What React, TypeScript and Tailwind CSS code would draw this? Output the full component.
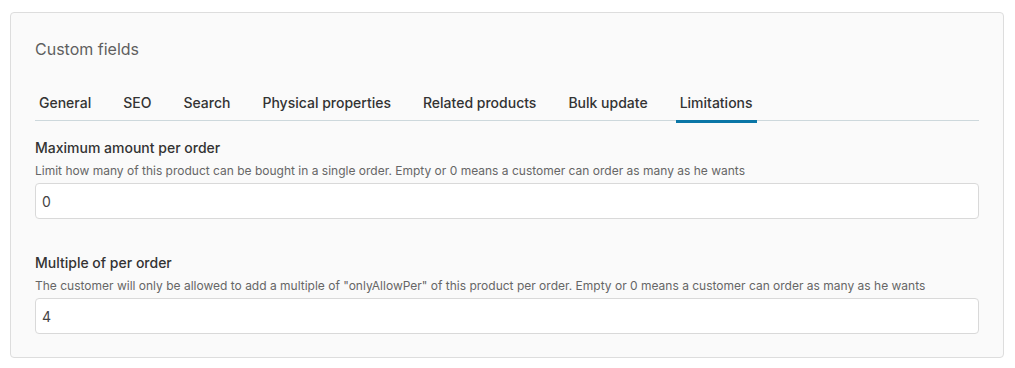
import { useState } from "react";

const TABS = ["General", "SEO", "Search", "Physical properties", "Related products", "Bulk update", "Limitations"];

function Field({ label, help, value }: { label: string; help: string; value: string }) {
  const [v, setV] = useState(value);
  return (
    <div>
      <div className="text-[14px] leading-5 font-medium text-[#333]">{label}</div>
      <div className="mt-[5px] text-[12px] leading-4 text-[#666]">{help}</div>
      <input
        value={v}
        onChange={(e) => setV(e.target.value)}
        className="mt-1 block h-[36px] w-full rounded-[4px] border border-[#d9d9d9] bg-white px-[6px] text-[14px] text-[#444] outline-none"
      />
    </div>
  );
}

export default function App() {
  const [active, setActive] = useState("Limitations");
  return (
    <div className="h-[368px] bg-white pt-3 font-['Inter','Noto_Sans',sans-serif]">
      <div className="ml-[10px] w-[994px] rounded-[4px] border border-[#dddddd] bg-[#fafafa] px-6 pt-6 pb-[23px]">
        <h2 className="text-[16px] leading-6 font-normal text-[#5f5f5f]">Custom fields</h2>

        <div className="mt-[23px] flex gap-6 border-b border-[#cdd8dc]">
          {TABS.map((t) => (
            <button
              key={t}
              onClick={() => setActive(t)}
              className="relative px-1 pt-[9px] pb-[7px] text-[14px] leading-5 font-medium text-[#333]"
            >
              {t}
              {active === t && <span className="absolute left-0 right-0 top-full h-[3px] bg-[#0a76a6]" />}
            </button>
          ))}
        </div>

        <div className="mt-[17px]">
          <Field
            label="Maximum amount per order"
            help="Limit how many of this product can be bought in a single order. Empty or 0 means a customer can order as many as he wants"
            value="0"
          />
        </div>
        <div className="mt-[34px]">
          <Field
            label="Multiple of per order"
            help={'The customer will only be allowed to add a multiple of "onlyAllowPer" of this product per order. Empty or 0 means a customer can order as many as he wants'}
            value="4"
          />
        </div>
      </div>
    </div>
  );
}
